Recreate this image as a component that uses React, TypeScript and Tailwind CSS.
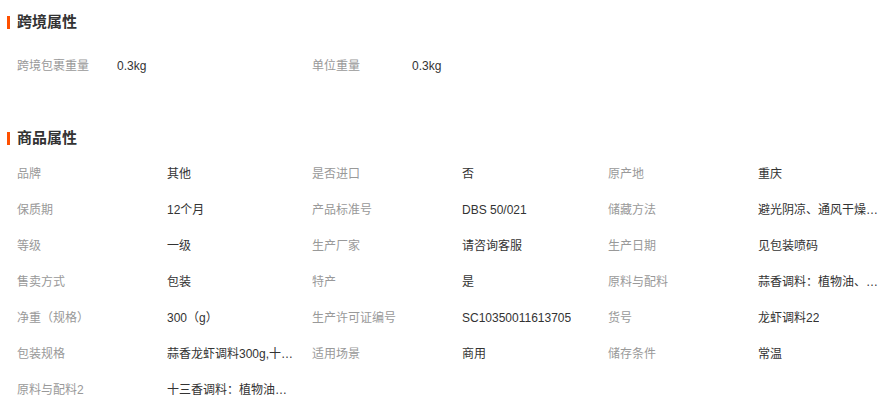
import React from 'react';

const cross = [
  ['跨境包裹重量', '0.3kg'],
  ['单位重量', '0.3kg'],
];

const attrs: [string, string][] = [
  ['品牌', '其他'],
  ['是否进口', '否'],
  ['原产地', '重庆'],
  ['保质期', '12个月'],
  ['产品标准号', 'DBS 50/021'],
  ['储藏方法', '避光阴凉、通风干燥处保存'],
  ['等级', '一级'],
  ['生产厂家', '请咨询客服'],
  ['生产日期', '见包装喷码'],
  ['售卖方式', '包装'],
  ['特产', '是'],
  ['原料与配料', '蒜香调料：植物油、辣椒、大蒜'],
  ['净重（规格）', '300（g）'],
  ['生产许可证编号', 'SC10350011613705'],
  ['货号', '龙虾调料22'],
  ['包装规格', '蒜香龙虾调料300g,十三香调料300g'],
  ['适用场景', '商用'],
  ['储存条件', '常温'],
  ['原料与配料2', '十三香调料：植物油、香辛料'],
];

function Title({ text }: { text: string }) {
  return (
    <div className="flex items-center h-[14px]">
      <span className="w-[3px] h-[13px] bg-[#ff5000]" />
      <span className="ml-[7px] text-[15px] font-bold leading-[14px] text-[#333]">{text}</span>
    </div>
  );
}

export default function App() {
  return (
    <div
      className="w-[886px] h-[407px] bg-white pl-[7px] overflow-hidden text-[12px]"
      style={{ fontFamily: '"Liberation Sans", "Noto Sans CJK SC", sans-serif' }}
    >
      <div className="pt-[15px]">
        <Title text="跨境属性" />
      </div>
      <div className="mt-[19px] flex pl-[10px] h-[36px] items-center">
        {cross.map(([k, v], i) => (
          <div key={i} className="flex">
            <span className="w-[100px] text-[#999]">{k}</span>
            <span className="w-[195px] text-[#333]">{v}</span>
          </div>
        ))}
      </div>
      <div className="mt-[47px]">
        <Title text="商品属性" />
      </div>
      <div className="mt-[11px] pl-[10px] grid grid-cols-[150px_145px_150px_146px_150px_127px]">
        {attrs.map(([k, v], i) => (
          <React.Fragment key={i}>
            <div className="h-[36px] flex items-center text-[#999] whitespace-nowrap">{k}</div>
            <div className="h-[36px] flex items-center text-[#333] min-w-0">
              <span className="block max-w-[127px] truncate">{v}</span>
            </div>
          </React.Fragment>
        ))}
      </div>
    </div>
  );
}
